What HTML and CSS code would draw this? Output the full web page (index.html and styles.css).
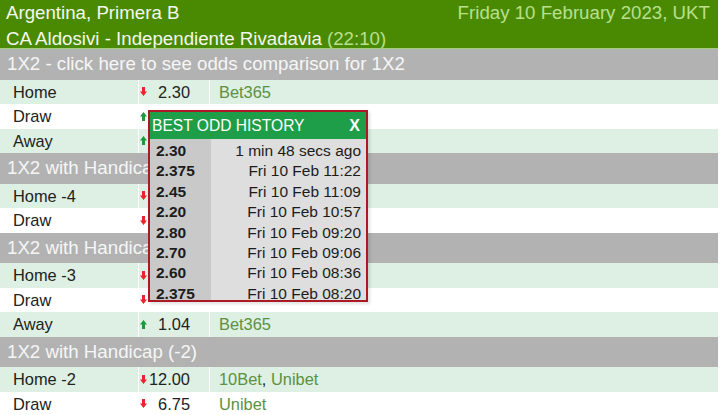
FILE: index.html
```html
<!DOCTYPE html>
<html>
<head>
<meta charset="utf-8">
<link rel="stylesheet" href="styles.css">
</head>
<body>
<div class="page">
  <div class="header">
    <div class="hline"><span>Argentina, Primera B</span><span class="light">Friday 10 February 2023, UKT</span></div>
    <div class="hline"><span>CA Aldosivi - Independiente Rivadavia <span class="light">(22:10)</span></span></div>
  </div>

  <div class="section">1X2 - click here to see odds comparison for 1X2</div>
  <div class="row alt"><div class="name">Home</div><div class="odds"><svg class="arr down" viewBox="0 0 7 9"><path d="M2 0h3v4.5h2L3.5 9 0 4.5h2z"/></svg><span>2.30</span></div><div class="book">Bet365</div></div>
  <div class="row"><div class="name">Draw</div><div class="odds"><svg class="arr up" viewBox="0 0 7 9"><path d="M2 9h3V4.5h2L3.5 0 0 4.5h2z"/></svg><span></span></div><div class="book"></div></div>
  <div class="row alt"><div class="name">Away</div><div class="odds"><svg class="arr up" viewBox="0 0 7 9"><path d="M2 9h3V4.5h2L3.5 0 0 4.5h2z"/></svg><span></span></div><div class="book"></div></div>

  <div class="section">1X2 with Handicap (-4)</div>
  <div class="row alt"><div class="name">Home -4</div><div class="odds"><svg class="arr down" viewBox="0 0 7 9"><path d="M2 0h3v4.5h2L3.5 9 0 4.5h2z"/></svg><span></span></div><div class="book"></div></div>
  <div class="row"><div class="name">Draw</div><div class="odds"><svg class="arr down" viewBox="0 0 7 9"><path d="M2 0h3v4.5h2L3.5 9 0 4.5h2z"/></svg><span></span></div><div class="book"></div></div>

  <div class="section">1X2 with Handicap (-3)</div>
  <div class="row alt"><div class="name">Home -3</div><div class="odds"><svg class="arr down" viewBox="0 0 7 9"><path d="M2 0h3v4.5h2L3.5 9 0 4.5h2z"/></svg><span></span></div><div class="book"></div></div>
  <div class="row"><div class="name">Draw</div><div class="odds"><svg class="arr down" viewBox="0 0 7 9"><path d="M2 0h3v4.5h2L3.5 9 0 4.5h2z"/></svg><span></span></div><div class="book"></div></div>
  <div class="row alt"><div class="name">Away</div><div class="odds"><svg class="arr up" viewBox="0 0 7 9"><path d="M2 9h3V4.5h2L3.5 0 0 4.5h2z"/></svg><span>1.04</span></div><div class="book">Bet365</div></div>

  <div class="section">1X2 with Handicap (-2)</div>
  <div class="row alt"><div class="name">Home -2</div><div class="odds"><svg class="arr down" viewBox="0 0 7 9"><path d="M2 0h3v4.5h2L3.5 9 0 4.5h2z"/></svg><span>12.00</span></div><div class="book">10Bet<span class="sep">, </span>Unibet</div></div>
  <div class="row"><div class="name">Draw</div><div class="odds"><svg class="arr down" viewBox="0 0 7 9"><path d="M2 0h3v4.5h2L3.5 9 0 4.5h2z"/></svg><span>6.75</span></div><div class="book">Unibet</div></div>

  <div class="popup">
    <div class="ptitle"><span>BEST ODD HISTORY</span><span class="close">X</span></div>
    <div class="plist">
      <div class="prow"><span class="pv">2.30</span><span class="pt">1 min 48 secs ago</span></div>
      <div class="prow"><span class="pv">2.375</span><span class="pt">Fri 10 Feb 11:22</span></div>
      <div class="prow"><span class="pv">2.45</span><span class="pt">Fri 10 Feb 11:09</span></div>
      <div class="prow"><span class="pv">2.20</span><span class="pt">Fri 10 Feb 10:57</span></div>
      <div class="prow"><span class="pv">2.80</span><span class="pt">Fri 10 Feb 09:20</span></div>
      <div class="prow"><span class="pv">2.70</span><span class="pt">Fri 10 Feb 09:06</span></div>
      <div class="prow"><span class="pv">2.60</span><span class="pt">Fri 10 Feb 08:36</span></div>
      <div class="prow"><span class="pv">2.375</span><span class="pt">Fri 10 Feb 08:20</span></div>
    </div>
  </div>
</div>
</body>
</html>
```

FILE: styles.css
```css
html, body {
  margin: 0;
  padding: 0;
  background: #ffffff;
  overflow: hidden;
}
.page {
  position: relative;
  width: 718px;
  height: 415px;
  overflow: hidden;
  font-family: "Liberation Sans", Arial, sans-serif;
}
.header {
  box-sizing: border-box;
  height: 49px;
  background: #4a8a02;
  color: #f4f8ee;
  font-size: 18.7px;
  line-height: 26px;
  padding: 0 8px 0 6px;
  overflow: hidden;
  border-bottom: 1px solid #9fcf7c;
}
.hline {
  display: flex;
  justify-content: space-between;
  white-space: nowrap;
}
.light {
  color: #b8e08e;
}
.section {
  box-sizing: border-box;
  height: 30.5px;
  background: #b2b2b2;
  color: #f6f6f6;
  font-size: 18.7px;
  line-height: 30px;
  padding-left: 7px;
  white-space: nowrap;
}
.row {
  display: grid;
  grid-template-columns: 138px 71px 1fr;
  height: 24.5px;
  font-size: 16.4px;
  line-height: 24px;
  color: #222222;
  background: #ffffff;
}
.row.alt {
  background: #ddf0e3;
}
.name {
  padding-left: 13px;
  white-space: nowrap;
}
.odds {
  display: flex;
  align-items: center;
  justify-content: space-between;
  border-left: 1px solid #ffffff;
  padding: 0 19px 0 1px;
}
.book {
  border-left: 1px solid #ffffff;
  padding-left: 9px;
  color: #5b9140;
  white-space: nowrap;
}
.sep {
  color: #222222;
}
.arr {
  width: 7px;
  height: 9px;
  flex: none;
}
.arr.down {
  fill: #e8242c;
}
.arr.up {
  fill: #1e9a3c;
}
.popup {
  position: absolute;
  left: 148px;
  top: 110px;
  width: 220px;
  height: 192px;
  box-sizing: border-box;
  border: 2px solid #ab1a24;
  overflow: hidden;
  background: linear-gradient(to right, #c9c9c9 0, #c9c9c9 61px, #dedede 61px);
  box-shadow: 2px 2px 3px rgba(0, 0, 0, 0.12);
}
.ptitle {
  display: flex;
  justify-content: space-between;
  align-items: center;
  height: 27px;
  background: #1e9e48;
  color: #ffffff;
  font-size: 15.6px;
  padding: 0 6px 0 2px;
}
.close {
  font-weight: bold;
  font-size: 16px;
}
.plist {
  padding-top: 2px;
}
.prow {
  display: flex;
  justify-content: space-between;
  height: 20.4px;
  line-height: 20.4px;
  font-size: 15.5px;
  color: #1c1c1c;
  padding: 0 5px 0 6px;
}
.pv {
  font-weight: bold;
}
```
